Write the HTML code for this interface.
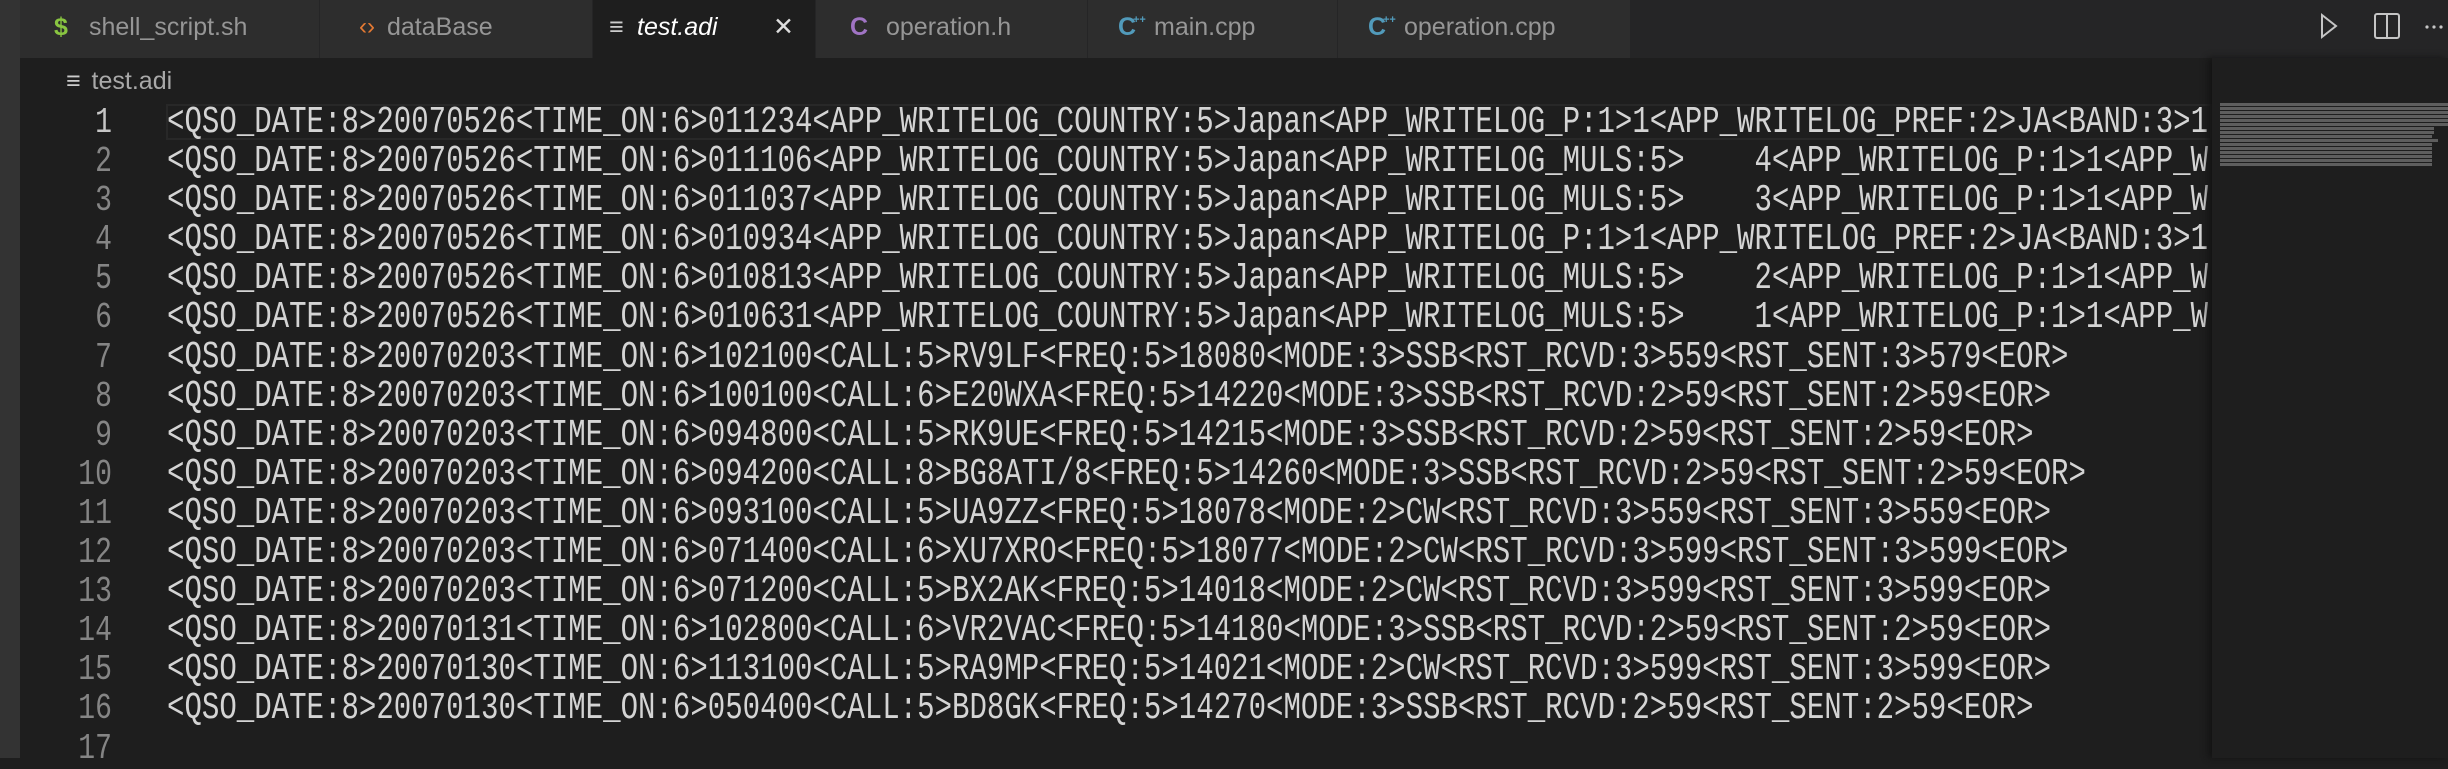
<!DOCTYPE html>
<html><head><meta charset="utf-8"><style>
html,body{margin:0;padding:0;width:2448px;height:758px;overflow:hidden;background:#1e1e1e;font-family:"Liberation Sans",sans-serif}
.strip{position:absolute;left:0;top:0;width:20px;height:758px;background:#333}
.tabbar{position:absolute;left:20px;top:0;width:2428px;height:58px;background:#252526}
.tab{position:absolute;top:0;height:58px;background:#2d2d2d;border-right:1px solid #252526;color:#969696;font-size:25px;line-height:54px;box-sizing:border-box;white-space:nowrap}
.tab .ic{position:absolute;top:0}
.tab .t{position:absolute;top:0}
.pp{position:absolute;left:15px;top:-7px;font-size:11px;font-weight:bold}
.code{position:absolute;left:167px;top:103px;width:2043px;height:655px;overflow:hidden}
.code pre{margin:0;font-family:"Liberation Mono",monospace;font-size:38px;line-height:39.1px;color:#d4d4d4;transform:scaleX(0.765);transform-origin:0 0;width:2800px}
.ln{position:absolute;left:40px;top:103px;width:72px;text-align:right;font-family:"Liberation Mono",monospace;font-size:36px;line-height:39.1px;color:#858585}
.ln div{transform:scaleX(0.78);transform-origin:100% 0}
.hl{position:absolute;left:166px;top:104px;width:2046px;height:36px;border:2px solid #282828;box-sizing:border-box}
.mm{position:absolute;left:2212px;top:58px;width:236px;height:700px;background:#1e1e1e;box-shadow:-4px 0 6px #141414}
.mm div{position:absolute;left:8px;height:3px;background:#5e5e5e}
</style></head><body>
<div class="strip"></div>
<div class="tabbar"></div>
<div class="tab" style="left:20px;width:300px"><span class="ic" style="left:34px;color:#89c541;font-weight:bold">$</span><span class="t" style="left:69px">shell_script.sh</span></div>
<div class="tab" style="left:320px;width:273px"><span class="ic" style="left:39px;color:#e37933;font-size:24px">&lsaquo;&rsaquo;</span><span class="t" style="left:67px">dataBase</span></div>
<div class="tab" style="left:593px;width:223px;background:#1e1e1e;color:#fff"><span class="ic" style="left:16px;color:#ccc">&#8801;</span><span class="t" style="left:44px;font-style:italic">test.adi</span><span class="ic" style="left:180px;color:#ddd">✕</span></div>
<div class="tab" style="left:816px;width:272px"><span class="ic" style="left:34px;color:#a074c4;font-weight:bold">C</span><span class="t" style="left:70px">operation.h</span></div>
<div class="tab" style="left:1088px;width:250px"><span class="ic" style="left:30px;color:#519aba;font-weight:bold">C<span class="pp">++</span></span><span class="t" style="left:66px">main.cpp</span></div>
<div class="tab" style="left:1338px;width:293px"><span class="ic" style="left:30px;color:#519aba;font-weight:bold">C<span class="pp">++</span></span><span class="t" style="left:66px">operation.cpp</span></div>
<svg style="position:absolute;left:2310px;top:6px" width="138" height="40">
<path d="M12 9 L12 31 L26 20 Z" fill="none" stroke="#c5c5c5" stroke-width="2"/>
<rect x="65" y="8" width="24" height="24" rx="2" fill="none" stroke="#c5c5c5" stroke-width="2"/><line x1="77" y1="8" x2="77" y2="32" stroke="#c5c5c5" stroke-width="2"/>
<circle cx="117" cy="21" r="1.6" fill="#c5c5c5"/><circle cx="124" cy="21" r="1.6" fill="#c5c5c5"/><circle cx="131" cy="21" r="1.6" fill="#c5c5c5"/>
</svg>
<div style="position:absolute;left:66px;top:64px;font-size:25px;color:#a9a9a9;line-height:34px"><span style="color:#ccc">&#8801;</span> <span style="margin-left:4px">test.adi</span></div>
<div class="hl"></div>
<div class="ln"><div style="color:#c6c6c6">1</div><div>2</div><div>3</div><div>4</div><div>5</div><div>6</div><div>7</div><div>8</div><div>9</div><div>10</div><div>11</div><div>12</div><div>13</div><div>14</div><div>15</div><div>16</div><div>17</div></div>
<div class="code"><pre>&lt;QSO_DATE:8&gt;20070526&lt;TIME_ON:6&gt;011234&lt;APP_WRITELOG_COUNTRY:5&gt;Japan&lt;APP_WRITELOG_P:1&gt;1&lt;APP_WRITELOG_PREF:2&gt;JA&lt;BAND:3&gt;1
&lt;QSO_DATE:8&gt;20070526&lt;TIME_ON:6&gt;011106&lt;APP_WRITELOG_COUNTRY:5&gt;Japan&lt;APP_WRITELOG_MULS:5&gt;    4&lt;APP_WRITELOG_P:1&gt;1&lt;APP_W
&lt;QSO_DATE:8&gt;20070526&lt;TIME_ON:6&gt;011037&lt;APP_WRITELOG_COUNTRY:5&gt;Japan&lt;APP_WRITELOG_MULS:5&gt;    3&lt;APP_WRITELOG_P:1&gt;1&lt;APP_W
&lt;QSO_DATE:8&gt;20070526&lt;TIME_ON:6&gt;010934&lt;APP_WRITELOG_COUNTRY:5&gt;Japan&lt;APP_WRITELOG_P:1&gt;1&lt;APP_WRITELOG_PREF:2&gt;JA&lt;BAND:3&gt;1
&lt;QSO_DATE:8&gt;20070526&lt;TIME_ON:6&gt;010813&lt;APP_WRITELOG_COUNTRY:5&gt;Japan&lt;APP_WRITELOG_MULS:5&gt;    2&lt;APP_WRITELOG_P:1&gt;1&lt;APP_W
&lt;QSO_DATE:8&gt;20070526&lt;TIME_ON:6&gt;010631&lt;APP_WRITELOG_COUNTRY:5&gt;Japan&lt;APP_WRITELOG_MULS:5&gt;    1&lt;APP_WRITELOG_P:1&gt;1&lt;APP_W
&lt;QSO_DATE:8&gt;20070203&lt;TIME_ON:6&gt;102100&lt;CALL:5&gt;RV9LF&lt;FREQ:5&gt;18080&lt;MODE:3&gt;SSB&lt;RST_RCVD:3&gt;559&lt;RST_SENT:3&gt;579&lt;EOR&gt;
&lt;QSO_DATE:8&gt;20070203&lt;TIME_ON:6&gt;100100&lt;CALL:6&gt;E20WXA&lt;FREQ:5&gt;14220&lt;MODE:3&gt;SSB&lt;RST_RCVD:2&gt;59&lt;RST_SENT:2&gt;59&lt;EOR&gt;
&lt;QSO_DATE:8&gt;20070203&lt;TIME_ON:6&gt;094800&lt;CALL:5&gt;RK9UE&lt;FREQ:5&gt;14215&lt;MODE:3&gt;SSB&lt;RST_RCVD:2&gt;59&lt;RST_SENT:2&gt;59&lt;EOR&gt;
&lt;QSO_DATE:8&gt;20070203&lt;TIME_ON:6&gt;094200&lt;CALL:8&gt;BG8ATI/8&lt;FREQ:5&gt;14260&lt;MODE:3&gt;SSB&lt;RST_RCVD:2&gt;59&lt;RST_SENT:2&gt;59&lt;EOR&gt;
&lt;QSO_DATE:8&gt;20070203&lt;TIME_ON:6&gt;093100&lt;CALL:5&gt;UA9ZZ&lt;FREQ:5&gt;18078&lt;MODE:2&gt;CW&lt;RST_RCVD:3&gt;559&lt;RST_SENT:3&gt;559&lt;EOR&gt;
&lt;QSO_DATE:8&gt;20070203&lt;TIME_ON:6&gt;071400&lt;CALL:6&gt;XU7XRO&lt;FREQ:5&gt;18077&lt;MODE:2&gt;CW&lt;RST_RCVD:3&gt;599&lt;RST_SENT:3&gt;599&lt;EOR&gt;
&lt;QSO_DATE:8&gt;20070203&lt;TIME_ON:6&gt;071200&lt;CALL:5&gt;BX2AK&lt;FREQ:5&gt;14018&lt;MODE:2&gt;CW&lt;RST_RCVD:3&gt;599&lt;RST_SENT:3&gt;599&lt;EOR&gt;
&lt;QSO_DATE:8&gt;20070131&lt;TIME_ON:6&gt;102800&lt;CALL:6&gt;VR2VAC&lt;FREQ:5&gt;14180&lt;MODE:3&gt;SSB&lt;RST_RCVD:2&gt;59&lt;RST_SENT:2&gt;59&lt;EOR&gt;
&lt;QSO_DATE:8&gt;20070130&lt;TIME_ON:6&gt;113100&lt;CALL:5&gt;RA9MP&lt;FREQ:5&gt;14021&lt;MODE:2&gt;CW&lt;RST_RCVD:3&gt;599&lt;RST_SENT:3&gt;599&lt;EOR&gt;
&lt;QSO_DATE:8&gt;20070130&lt;TIME_ON:6&gt;050400&lt;CALL:5&gt;BD8GK&lt;FREQ:5&gt;14270&lt;MODE:3&gt;SSB&lt;RST_RCVD:2&gt;59&lt;RST_SENT:2&gt;59&lt;EOR&gt;
</pre></div>
<div class="mm">
<div style="top:45px;width:228px"></div><div style="top:49px;width:228px"></div><div style="top:53px;width:228px"></div><div style="top:57px;width:228px"></div><div style="top:61px;width:228px"></div><div style="top:65px;width:228px"></div>
<div style="top:69px;width:214px"></div><div style="top:73px;width:214px"></div><div style="top:77px;width:212px"></div><div style="top:81px;width:218px"></div><div style="top:85px;width:212px"></div><div style="top:89px;width:212px"></div><div style="top:93px;width:212px"></div><div style="top:97px;width:212px"></div><div style="top:101px;width:212px"></div><div style="top:105px;width:212px"></div>
</div>
</body></html>
